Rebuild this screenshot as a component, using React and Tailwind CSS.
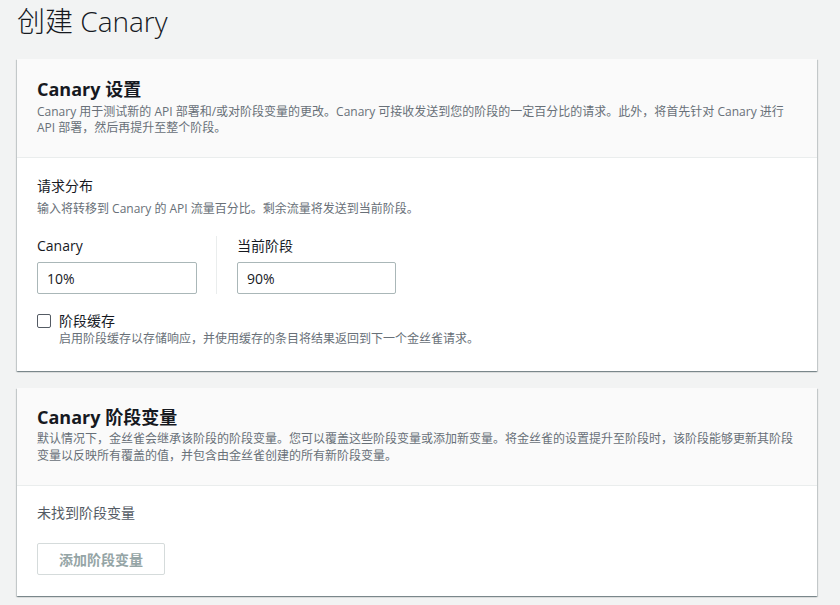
export default function App() {
  const font = { fontFamily: '"Open Sans", "Noto Sans CJK SC", sans-serif' };
  return (
    <div className="min-h-[605px] w-[840px] bg-[#f2f3f3] text-[#16191f]" style={font}>
      <div className="px-[17px] pb-4">
        <h1 className="pt-[3px] text-[28px] leading-[36px] font-light text-[#16191f]">创建 Canary</h1>

        <div className="mt-[20px] w-[800px] bg-white shadow-[0_1px_1px_0_rgba(0,28,36,0.3),1px_1px_1px_0_rgba(0,28,36,0.15),-1px_1px_1px_0_rgba(0,28,36,0.15)]">
          <div className="bg-[#fafafa] border-b border-[#eaeded] px-[20px] pt-[18px] pb-[21px]">
            <h2 className="text-[18px] leading-[24px] font-bold">Canary 设置</h2>
            <p className="mt-[3px] text-[12px] leading-[16px] text-[#687078]">
              Canary 用于测试新的 API 部署和/或对阶段变量的更改。Canary 可接收发送到您的阶段的一定百分比的请求。此外，将首先针对 Canary 进行 API 部署，然后再提升至整个阶段。
            </p>
          </div>
          <div className="px-[20px] pt-[18px] pb-[24px]">
            <div className="text-[14px] leading-[20px]">请求分布</div>
            <div className="mt-[5px] text-[12px] leading-[16px] text-[#687078]">输入将转移到 Canary 的 API 流量百分比。剩余流量将发送到当前阶段。</div>
            <div className="mt-[19px] flex">
              <div className="w-[180px] pr-[20px] border-r border-[#eaeded]">
                <div className="text-[14px] leading-[20px]">Canary</div>
                <input readOnly value="10%" className="mt-[6px] block w-[160px] h-[32px] rounded-[2px] border border-[#aab7b8] px-[9px] text-[14px] text-[#16191f] outline-none" style={font} />
              </div>
              <div className="pl-[20px]">
                <div className="text-[14px] leading-[20px]">当前阶段</div>
                <input readOnly value="90%" className="mt-[6px] block w-[159px] h-[32px] rounded-[2px] border border-[#aab7b8] px-[9px] text-[14px] text-[#16191f] outline-none" style={font} />
              </div>
            </div>
            <div className="mt-[17px] flex">
              <div className="mt-[3px] w-[14px] h-[14px] rounded-[2px] border border-[#545b64] bg-white shrink-0"></div>
              <div className="ml-[8px]">
                <div className="text-[14px] leading-[20px]">阶段缓存</div>
                <div className="text-[12px] leading-[16px] text-[#687078]">启用阶段缓存以存储响应，并使用缓存的条目将结果返回到下一个金丝雀请求。</div>
              </div>
            </div>
          </div>
        </div>

        <div className="mt-[17px] w-[800px] bg-white shadow-[0_1px_1px_0_rgba(0,28,36,0.3),1px_1px_1px_0_rgba(0,28,36,0.15),-1px_1px_1px_0_rgba(0,28,36,0.15)]">
          <div className="bg-[#fafafa] border-b border-[#eaeded] px-[20px] pt-[17px] pb-[21px]">
            <h2 className="text-[18px] leading-[24px] font-bold">Canary 阶段变量</h2>
            <p className="mt-[1px] text-[12px] leading-[17px] text-[#687078]">
              默认情况下，金丝雀会继承该阶段的阶段变量。您可以覆盖这些阶段变量或添加新变量。将金丝雀的设置提升至阶段时，该阶段能够更新其阶段变量以反映所有覆盖的值，并包含由金丝雀创建的所有新阶段变量。
            </p>
          </div>
          <div className="px-[20px] pt-[17px] pb-[21px]">
            <div className="text-[14px] leading-[20px] text-[#545b64]">未找到阶段变量</div>
            <button className="mt-[20px] w-[128px] h-[32px] rounded-[2px] border border-[#d5dbdb] bg-white text-[14px] font-bold text-[#95a5a6]" style={font}>添加阶段变量</button>
          </div>
        </div>
      </div>
    </div>
  );
}
